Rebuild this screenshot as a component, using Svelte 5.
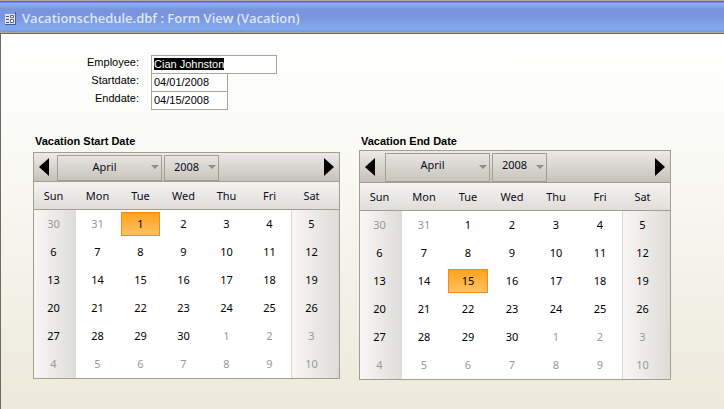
<script>
  import { onMount } from 'svelte';

  const dayNames = ['Sun', 'Mon', 'Tue', 'Wed', 'Thu', 'Fri', 'Sat'];
  const monthNames = ['January', 'February', 'March', 'April', 'May', 'June', 'July',
    'August', 'September', 'October', 'November', 'December'];
  const years = [2006, 2007, 2008, 2009, 2010];

  let employee = $state('Cian Johnston');
  let startText = $state('04/01/2008');
  let endText = $state('04/15/2008');
  let employeeBox;

  let calendars = $state([
    { id: 'start', title: 'Vacation Start Date', month: 3, year: 2008, picked: new Date(2008, 3, 1).getTime() },
    { id: 'end', title: 'Vacation End Date', month: 3, year: 2008, picked: new Date(2008, 3, 15).getTime() }
  ]);

  function weeksOf(year, month) {
    const lead = new Date(year, month, 1).getDay();
    return Array.from({ length: 6 }, (_, w) =>
      Array.from({ length: 7 }, (_, d) => new Date(year, month, 1 - lead + w * 7 + d))
    );
  }

  function step(cal, by) {
    const next = new Date(cal.year, cal.month + by, 1);
    cal.month = next.getMonth();
    cal.year = next.getFullYear();
  }

  function pick(cal, day) {
    cal.picked = day.getTime();
    const pad = (n) => String(n).padStart(2, '0');
    const text = `${pad(day.getMonth() + 1)}/${pad(day.getDate())}/${day.getFullYear()}`;
    if (cal.id === 'start') startText = text;
    else endText = text;
  }

  onMount(() => {
    employeeBox.focus();
    employeeBox.select();
  });
</script>

<div class="window">
  <header>
    <svg width="11" height="13" viewBox="0 0 11 13" aria-hidden="true">
      <rect x="0" y="0" width="11" height="13" fill="#4c5c8c" />
      <rect x="0" y="0" width="10" height="12" fill="#dfe2ee" />
      <rect x="0" y="0" width="10" height="2" fill="#7f9be0" />
      <path d="M1 4.5h3M1 7.5h3M1 10.5h3" stroke="#555b6a" />
      <path d="M5.5 3.5h3v2h-3zM5.5 7.5h3v3h-3z" fill="#fff" stroke="#62687a" />
    </svg>
    <h1>Vacationschedule.dbf : Form View (Vacation)</h1>
  </header>

  <main>
    <form onsubmit={(e) => e.preventDefault()}>
      <label for="employee">Employee:</label>
      <input id="employee" class="wide" bind:this={employeeBox} bind:value={employee} spellcheck="false" />
      <label for="startdate">Startdate:</label>
      <input id="startdate" bind:value={startText} />
      <label for="enddate">Enddate:</label>
      <input id="enddate" bind:value={endText} />
    </form>

    <div class="calendars">
      {#each calendars as cal (cal.id)}
        <section class={cal.id}>
          <h2>{cal.title}</h2>
          <div class="calendar">
            <div class="nav">
              <button class="arrow prev" aria-label="Previous month" onclick={() => step(cal, -1)}>
                <svg width="10" height="18" viewBox="0 0 10 18"><path d="M10 0v18L0 9z" /></svg>
              </button>
              <div class="drop month">
                <select aria-label="Month" bind:value={cal.month}>
                  {#each monthNames as name, i}<option value={i}>{name}</option>{/each}
                </select>
                <svg width="8" height="4" viewBox="0 0 8 4"><path d="M0 0h8L4 4z" /></svg>
              </div>
              <div class="drop year">
                <select aria-label="Year" bind:value={cal.year}>
                  {#each years as y}<option value={y}>{y}</option>{/each}
                </select>
                <svg width="8" height="4" viewBox="0 0 8 4"><path d="M0 0h8L4 4z" /></svg>
              </div>
              <button class="arrow next" aria-label="Next month" onclick={() => step(cal, 1)}>
                <svg width="10" height="18" viewBox="0 0 10 18"><path d="M0 0v18L10 9z" /></svg>
              </button>
            </div>
            <table>
              <colgroup>
                <col class="first" /><col /><col /><col /><col /><col /><col class="last" />
              </colgroup>
              <thead>
                <tr>{#each dayNames as name}<th scope="col">{name}</th>{/each}</tr>
              </thead>
              <tbody>
                {#each weeksOf(cal.year, cal.month) as week}
                  <tr>
                    {#each week as day}
                      <td>
                        <button
                          class="day"
                          class:other={day.getMonth() !== cal.month}
                          class:picked={day.getTime() === cal.picked}
                          onclick={() => pick(cal, day)}>{day.getDate()}</button>
                      </td>
                    {/each}
                  </tr>
                {/each}
              </tbody>
            </table>
          </div>
        </section>
      {/each}
    </div>
  </main>
</div>

<style>
  :global(body) {
    margin: 0;
  }

  .window {
    display: flex;
    flex-direction: column;
    min-height: 100vh;
    font-family: "Noto Sans", "Open Sans", sans-serif;
    color: #000;
  }

  header {
    display: flex;
    align-items: center;
    gap: 6px;
    box-sizing: border-box;
    height: 34px;
    padding: 3px 5px 0;
    border-bottom: 1px solid #716a5e;
    background: linear-gradient(#aaa79f 0 1px, #6f735f 1px 2px, #6b86e0 2px 3px, #8db2f0 3px, #83a5ea 6px, #7a95de 9px, #7a95de 18px, #80a6eb 25px, #82a8ec 29px, #7896e2 32px, #b0a896 32px);
  }

  h1 {
    margin: 0;
    font: 600 13px/18px "Open Sans", "Noto Sans", sans-serif;
    color: #dfe8fc;
    white-space: nowrap;
  }

  main {
    flex: 1;
    padding: 21px 53px 30px 32px;
    border-left: 1px solid #716a5e;
    background: linear-gradient(#fff, #fcfcf9 20%, #edeadb);
  }

  form {
    display: grid;
    grid-template-columns: 106px 1fr;
    column-gap: 12px;
    font: 11px/15px "Liberation Sans", Arial, sans-serif;
  }

  label {
    text-align: right;
  }

  form input {
    box-sizing: border-box;
    width: 77px;
    height: 19px;
    margin: 0 0 -1px;
    padding: 0 0 2px 2px;
    border: 1px solid #aaa697;
    border-radius: 0;
    outline: none;
    background: #fff;
    font: inherit;
  }

  form .wide {
    width: 126px;
  }

  form input::selection {
    background: #000;
    color: #fff;
  }

  .calendars {
    display: grid;
    grid-template-columns: 307fr 312fr;
    align-items: start;
    column-gap: 19px;
    margin-top: 24px;
  }

  h2 {
    margin: 0 2px 3px;
    font: 700 11px/16px "Liberation Sans", Arial, sans-serif;
  }

  .end h2 {
    margin-bottom: 1px;
  }

  .calendar {
    border: 1px solid #a29f90;
  }

  .nav {
    display: flex;
    align-items: stretch;
    gap: 2px;
    box-sizing: border-box;
    height: 29px;
    padding: 1px 5px;
    border-bottom: 1px solid #a29f90;
    background: linear-gradient(#ebeae8, #c6c2ba);
  }

  .end .nav {
    height: 32px;
  }

  .arrow {
    display: flex;
    align-items: center;
    padding: 0;
    border: 0;
    background: none;
  }

  .prev {
    width: 16px;
  }

  .end .prev {
    width: 18px;
  }

  .next {
    margin-left: auto;
  }

  .drop {
    position: relative;
    width: 105px;
  }

  .year {
    width: 55px;
  }

  .drop select {
    box-sizing: border-box;
    width: 100%;
    height: 100%;
    padding: 0 10px 2px 0;
    border: 1px solid #a29f90;
    border-radius: 0;
    appearance: none;
    background: linear-gradient(#e6e5e2, #c9c5bd);
    color: #0c0c20;
    font: 11px/16px "Noto Sans", "Open Sans", sans-serif;
    text-align-last: center;
  }

  .end .drop select {
    padding-bottom: 5px;
  }

  .drop svg {
    position: absolute;
    right: 3px;
    top: calc(50% - 2px);
    fill: #918d80;
    pointer-events: none;
  }

  table {
    width: 100%;
    table-layout: fixed;
    border-collapse: collapse;
    background: #fff;
    font-size: 11px;
    line-height: 16px;
  }

  .first {
    width: 42px;
  }

  .last {
    width: 48px;
  }

  thead {
    background: linear-gradient(#f4f3f2, #dfddd9);
  }

  th {
    height: 27px;
    padding: 0;
    border-bottom: 1px solid #a29f90;
    color: #0c0c20;
    font-weight: 400;
  }

  td {
    height: 28px;
    padding: 0 2px;
    vertical-align: middle;
  }

  th:first-child,
  td:first-child {
    padding: 0 3px 0 0;
  }

  th:last-child,
  td:last-child {
    padding: 0 7px 0 0;
  }

  td:first-child {
    background: linear-gradient(90deg, #f8f7f6, #dedcd8);
  }

  td:last-child {
    background: linear-gradient(90deg, #f8f7f6, #dedcd8);
    box-shadow: inset 1px 0 #d9d7d3;
  }

  .day {
    display: block;
    box-sizing: border-box;
    width: 100%;
    height: 24px;
    padding: 0;
    border: 1px solid transparent;
    background: none;
    color: #000;
    font: inherit;
  }

  .other {
    color: #999;
  }

  .picked {
    border-color: #f48a1c;
    background: linear-gradient(#fda31c, #ffc163);
  }
</style>
